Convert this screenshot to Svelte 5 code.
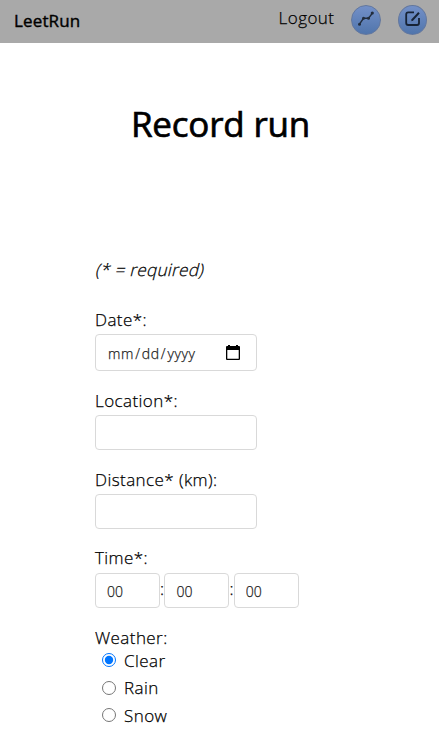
<script>
  let weather = $state('Clear');
  const conditions = ['Clear', 'Rain', 'Snow'];
</script>

<header>
  <a class="brand" href="#home">LeetRun</a>
  <nav>
    <a class="logout" href="#logout">Logout</a>
    <a class="round" href="#stats" aria-label="Statistics">
      <svg width="16" height="16" viewBox="0 0 16 16">
        <path d="M1.5 13.2 5.5 7.3H10.5L14.5 2" fill="none" stroke="#222d3d" stroke-width="1.4" />
        <g fill="#222d3d"><circle cx="1.5" cy="13.2" r="1.5" /><circle cx="5.5" cy="7.3" r="1.5" /><circle cx="10.5" cy="7.3" r="1.5" /><circle cx="14.3" cy="2" r="1.6" /></g>
      </svg>
    </a>
    <a class="round" href="#record" aria-label="Record run">
      <svg width="18" height="18" viewBox="0 0 18 18" fill="none" stroke="#172336" stroke-width="1.8">
        <path d="M10 2.4H4.2Q2.2 2.4 2.2 4.4V13Q2.2 15 4.2 15H13Q15 15 15 13V8" />
        <path d="M8 10.2 15 2.8" stroke-width="2" />
        <path d="M7.2 11.2 7.8 9.3 9.2 10.6Z" fill="#172336" stroke="none" />
      </svg>
    </a>
  </nav>
</header>

<main>
  <h1>Record run</h1>
  <form>
    <p><em>(* = required)</em></p>
    <label class="field date">
      <span>Date*:</span>
      <div class="input">
        <span>mm<b>/</b>dd<b>/</b>yyyy</span>
        <svg width="14" height="15" viewBox="0 0 14 15">
          <path d="M2 0H4V1H10V0H12V1H13Q14 1 14 2V14Q14 15 13 15H1Q0 15 0 14V2Q0 1 1 1H2ZM1.3 5V13.7H12.7V5Z" fill="#000" fill-rule="evenodd" />
        </svg>
      </div>
    </label>
    <label class="field location"><span>Location*:</span><input type="text" /></label>
    <label class="field distance"><span>Distance* (km):</span><input type="text" /></label>
    <div class="field time">
      <span>Time*:</span>
      <div class="parts">
        <input aria-label="Hours" value="00" /><i>:</i><input aria-label="Minutes" value="00" /><i>:</i><input aria-label="Seconds" value="00" />
      </div>
    </div>
    <fieldset>
      <legend>Weather:</legend>
      {#each conditions as name}
        <label class="choice"><input type="radio" name="weather" value={name} bind:group={weather} /><span>{name}</span></label>
      {/each}
    </fieldset>
  </form>
</main>

<style>
  :global(body) { background: #fff; overflow: hidden; }
  :global(#app) { font: 300 17px/24px "Open Sans", sans-serif; color: #000; -webkit-text-stroke: .25px currentColor; }
  header { box-sizing: border-box; height: 43px; background: #a9a9a9; display: flex; justify-content: space-between; padding: 0 12px 0 14px; }
  a { color: #000; text-decoration: none; }
  .brand { font-weight: 400; font-size: 17px; line-height: 42px; letter-spacing: .15px; -webkit-text-stroke: .4px #000; }
  nav { display: flex; align-items: flex-start; }
  .logout { line-height: 36px; margin-right: 16.5px; letter-spacing: .45px; }
  .round { box-sizing: border-box; width: 30px; height: 30px; margin-top: 5px; border: 1px solid #62779f; border-radius: 50%; background: linear-gradient(#7390c8, #5075ac); display: flex; align-items: center; justify-content: center; }
  .round + .round { margin-left: 17px; width: 29px; }
  .round svg { flex: none; margin-top: -2px; }
  h1 { margin: 56px 0 0 2px; height: 51px; font-size: 35px; line-height: 50px; letter-spacing: -.2px; font-weight: 400; -webkit-text-stroke: .7px #000; text-align: center; }
  form { margin: 108px 0 0 95px; letter-spacing: .42px; }
  p { margin: 0 0 26px; height: 24px; letter-spacing: .35px; }
  em { display: inline-block; font-style: normal; transform: skewX(-14deg); transform-origin: 0 18px; }
  .field { display: flex; flex-direction: column; align-items: flex-start; }
  .field > span { height: 24px; }
  .input, input:not([type='radio']) { box-sizing: border-box; width: 162px; height: 35px; margin: 2px 0 0; border: 1px solid #d9d9d9; border-radius: 4px; background: #fff; color: #222; font: 300 14px/20px "Open Sans", sans-serif; -webkit-text-stroke: .25px currentColor; outline: none; }
  .input { display: flex; align-items: center; justify-content: space-between; height: 37px; padding: 2px 16px 0 12px; letter-spacing: .55px; }
  .input b { font-weight: inherit; margin: 0 1.3px; }
  .input svg { margin-top: -2px; }
  .location { margin-top: 18px; }
  .distance { margin-top: 18px; }
  .time { margin-top: 17px; }
  .parts { display: flex; margin-top: 1px; }
  .parts input:not([type='radio']) { width: 65px; padding: 2px 11px 0; }
  .parts i { width: 4.4px; font-style: normal; line-height: 36px; height: 37px; letter-spacing: 0; }
  fieldset { margin: 18px 0 0; padding: 0; border: 0; }
  legend { padding: 0; height: 21px; }
  .choice { display: flex; align-items: center; height: 27.6px; }
  .choice input { width: 14px; height: 14px; margin: -1px 8px 0 7px; accent-color: #0075ff; }
</style>
